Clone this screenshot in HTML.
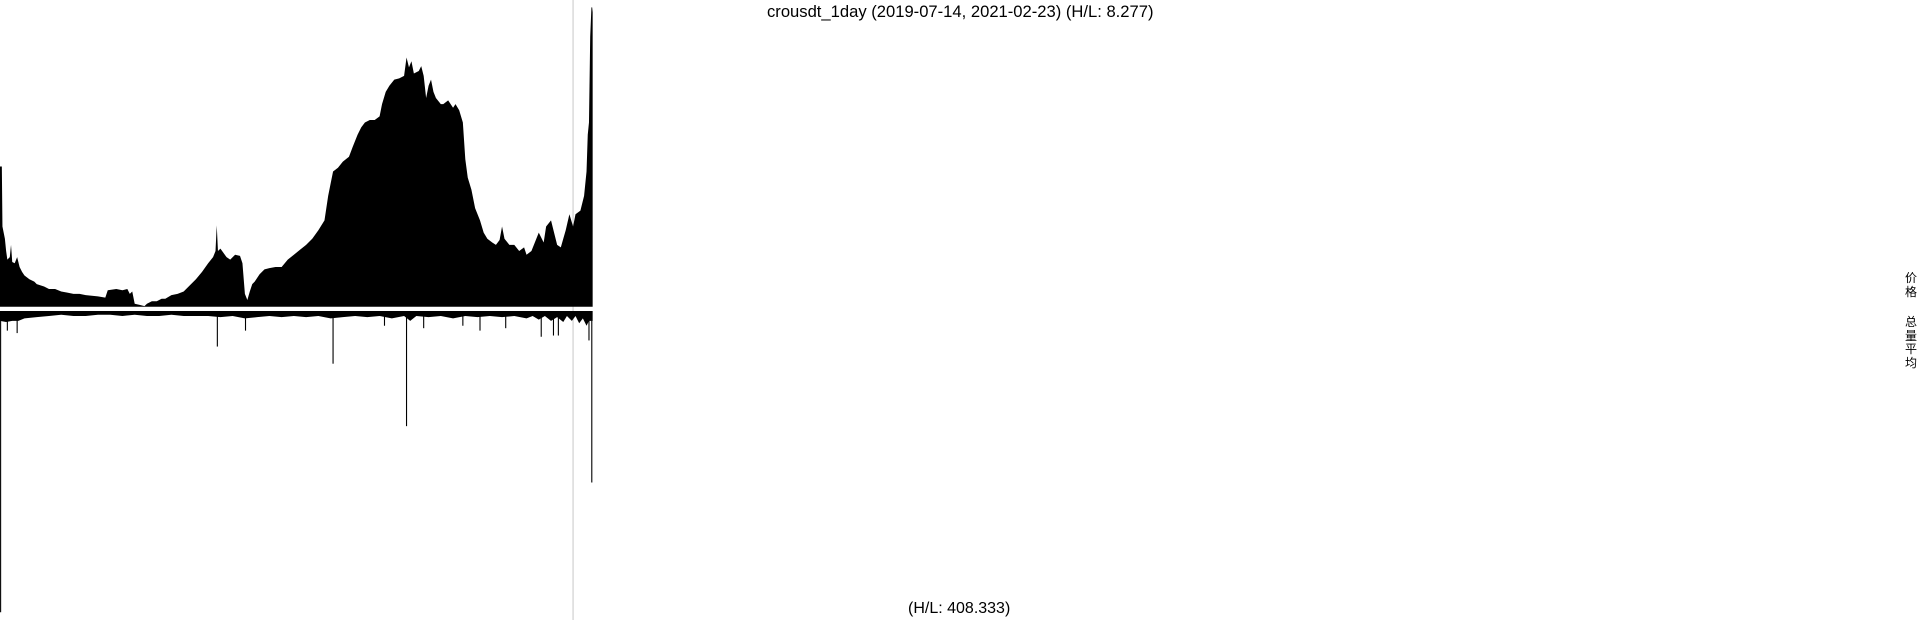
<!DOCTYPE html>
<html><head><meta charset="utf-8"><style>
html,body{margin:0;padding:0;background:#fff;width:1920px;height:620px;overflow:hidden;position:relative;font-family:"Liberation Sans","Noto Sans CJK SC",sans-serif;}
.t{position:absolute;font-size:16px;color:#000;white-space:nowrap;}
.v{position:absolute;left:1905px;font-size:12px;line-height:13.5px;width:12px;color:#000;}
</style></head><body>
<svg width="1920" height="620" viewBox="0 0 1568 506.3" preserveAspectRatio="none" style="position:absolute;left:0;top:0">
<line x1="468" y1="0" x2="468" y2="506.3" stroke="#ccc" stroke-width="0.9"/>
<polygon fill="#000" points="0,250.5 0,136 1.5,136 2,185 4,195 5,205 6,212 8,210 9,200 10,214 12,215 14,210 16,218 18,222 20,225 24,228 28,230 30,232 36,234 40,236 45,236 50,238 55,239 60,240 65,240 70,241 80,242 86,243 88,237 95,236 100,237 104,236 106,240 108,238 110,248 114,249 118,250 120,248 124,246 128,246 132,244 135,244 140,241 145,240 150,238 155,233 160,228 165,222 170,215 174,210 176,205 177,184 178,205 180,203 185,210 188,212 192,208 196,209 198,215 200,240 202,245 204,238 206,232 208,230 212,224 216,220 220,219 225,218 230,218 235,212 240,208 245,204 250,200 255,195 260,188 265,180 268,160 270,150 272,140 276,137 280,132 285,128 288,120 290,115 292,110 295,104 298,100 302,98 306,98 310,95 312,85 315,75 318,70 322,65 326,64 330,62 332,47 334,55 336,50 338,60 342,58 344,54 346,62 348,80 350,70 352,65 354,75 356,80 360,85 362,85 366,82 370,88 372,85 375,90 378,100 380,130 382,145 385,155 388,170 392,180 395,190 398,195 402,198 405,200 408,196 410,185 412,195 416,200 420,200 424,205 428,202 430,208 434,205 438,195 440,190 444,198 446,185 450,180 453,192 455,200 458,202 460,195 462,188 465,175 468,185 470,175 474,172 477,160 479,140 480,110 481,100 482,30 483,6 483.6,6 484,10 484,250.5"/>
<polygon fill="#000" points="0,254 484,254 484,262 481,262 479,266 476,260 473,264 470,258 467,262 463,258 460,263 455,259 450,262 445,258 440,261 435,258 430,260 420,258 410,259 400,258 390,259 380,258 370,260 360,258 350,259 340,258 335,262 330,258 320,260 310,258 300,259 290,258 280,259 270,260 260,258 250,259 240,258 230,259 220,258 210,259 200,260 190,258 180,259 170,258 160,258 150,258 140,257 130,258 120,258 110,257 100,258 90,257 80,257 70,258 60,258 50,257 40,258 30,259 20,260 15,262 10,262 5,263 0,262"/>
<g stroke="#000" stroke-width="0.9">
<line x1="0.5" y1="254" x2="0.5" y2="500"/>
<line x1="177.5" y1="254" x2="177.5" y2="283"/>
<line x1="200.5" y1="254" x2="200.5" y2="270"/>
<line x1="272" y1="254" x2="272" y2="297"/>
<line x1="332" y1="254" x2="332" y2="348"/>
<line x1="483.3" y1="254" x2="483.3" y2="394"/>
<line x1="481" y1="254" x2="481" y2="278"/>
<line x1="442" y1="254" x2="442" y2="275"/>
<line x1="14" y1="254" x2="14" y2="272"/>
<line x1="6" y1="254" x2="6" y2="270"/>
<line x1="392" y1="254" x2="392" y2="270"/>
<line x1="413" y1="254" x2="413" y2="268"/>
<line x1="452" y1="254" x2="452" y2="274"/>
<line x1="456" y1="254" x2="456" y2="274"/>
<line x1="378" y1="254" x2="378" y2="266"/>
<line x1="346" y1="254" x2="346" y2="268"/>
<line x1="314" y1="254" x2="314" y2="266"/>
</g>
</svg>
<div class="t" style="left:767px;top:2px;font-size:16.6px;">crousdt_1day (2019-07-14, 2021-02-23) (H/L: 8.277)</div>
<div class="t" style="left:908px;top:600px;">(H/L: 408.333)</div>
<div class="v" style="top:272px;">价<br>格</div>
<div class="v" style="top:316px;">总<br>量<br>平<br>均</div>
</body></html>
